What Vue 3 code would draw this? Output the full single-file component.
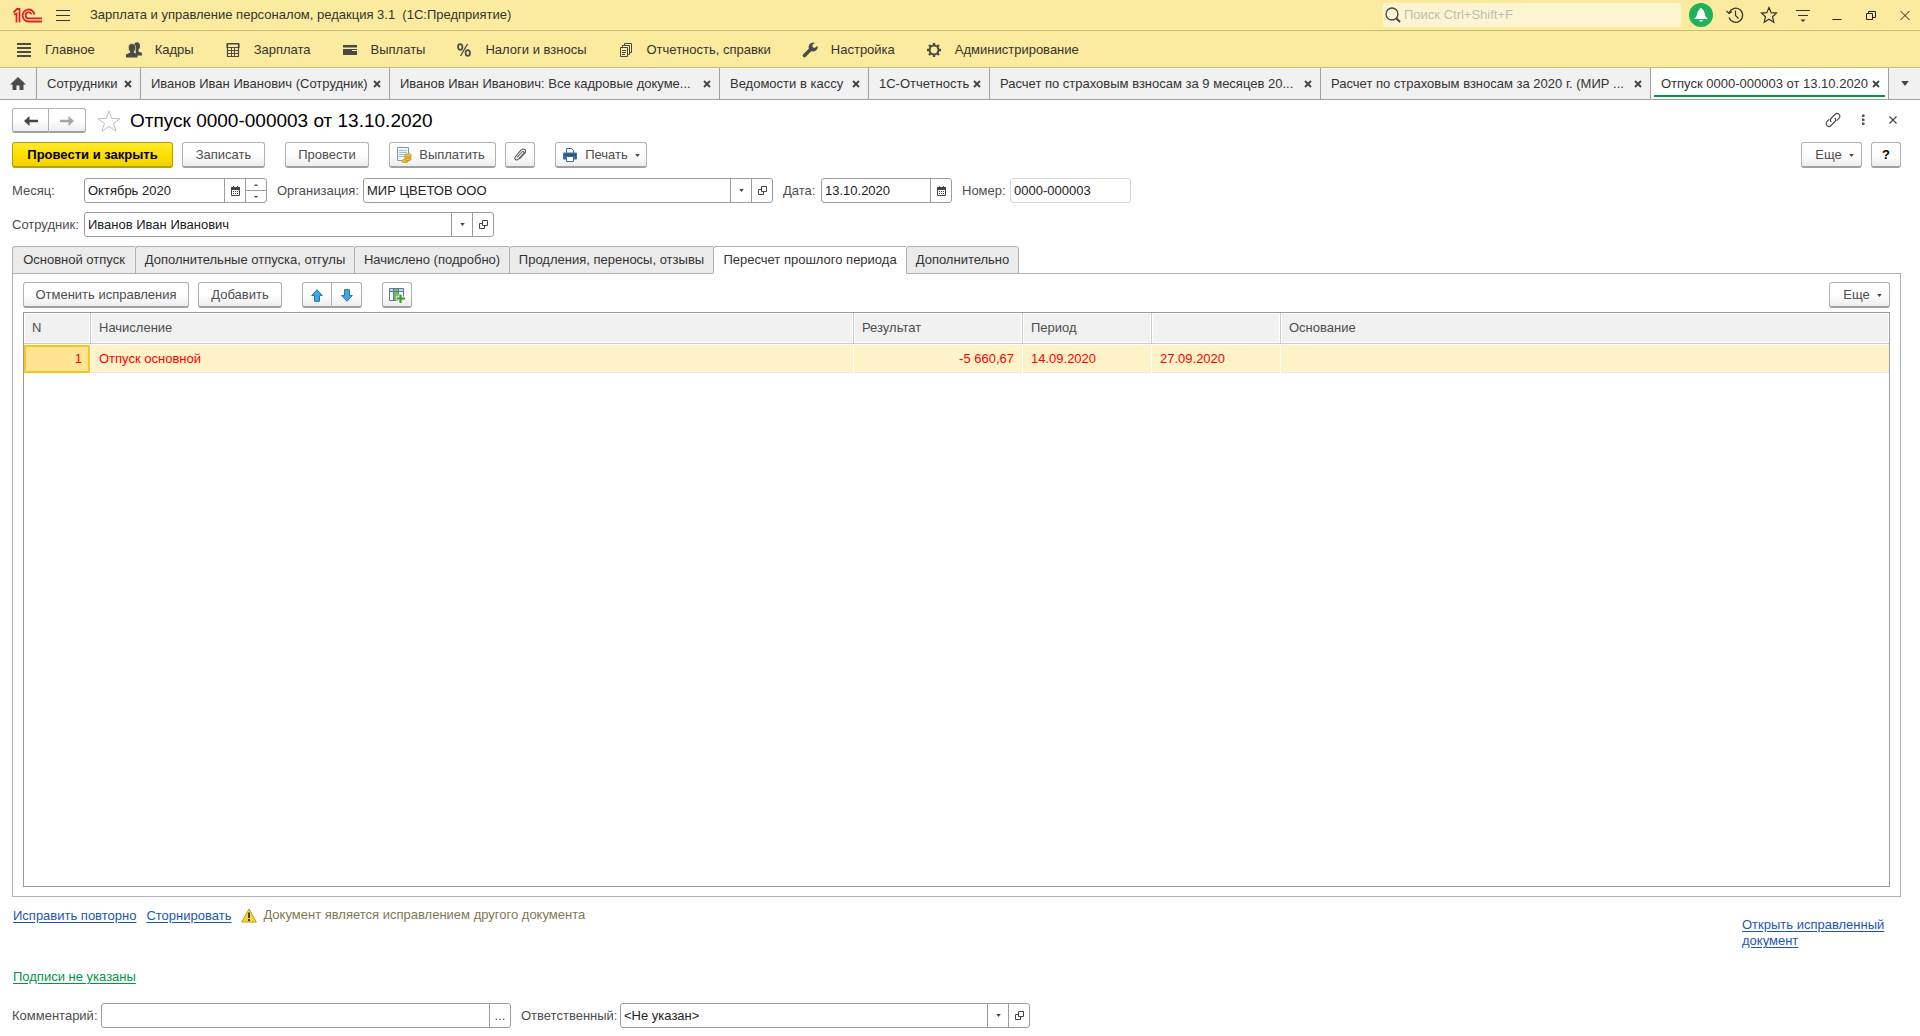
<script setup>
import { ref } from 'vue'

const sections = [
  { icon: 'list', text: 'Главное' },
  { icon: 'people', text: 'Кадры' },
  { icon: 'calc', text: 'Зарплата' },
  { icon: 'wallet', text: 'Выплаты' },
  { icon: 'percent', text: 'Налоги и взносы' },
  { icon: 'docs', text: 'Отчетность, справки' },
  { icon: 'wrench', text: 'Настройка' },
  { icon: 'gear', text: 'Администрирование' },
]

const windows = [
  'Сотрудники',
  'Иванов Иван Иванович (Сотрудник)',
  'Иванов Иван Иванович: Все кадровые докуме...',
  'Ведомости в кассу',
  '1С-Отчетность',
  'Расчет по страховым взносам за 9 месяцев 20...',
  'Расчет по страховым взносам за 2020 г. (МИР ...',
  'Отпуск 0000-000003 от 13.10.2020',
]
const activeWindow = ref(7)

const pages = [
  'Основной отпуск',
  'Дополнительные отпуска, отгулы',
  'Начислено (подробно)',
  'Продления, переносы, отзывы',
  'Пересчет прошлого периода',
  'Дополнительно',
]
const activePage = ref(4)

const systemButtons = [
  { icon: 'history', label: 'История' },
  { icon: 'star', label: 'Избранное' },
  { icon: 'service', label: 'Сервис' },
  { icon: 'minimize', label: 'Свернуть' },
  { icon: 'restore', label: 'Восстановить' },
  { icon: 'cross', label: 'Закрыть' },
]

const rows = [
  { n: 1, name: 'Отпуск основной', result: '-5 660,67', from: '14.09.2020', to: '27.09.2020', basis: '' },
]

const month = ref('Октябрь 2020')
const organization = ref('МИР ЦВЕТОВ ООО')
const date = ref('13.10.2020')
const number = ref('0000-000003')
const employee = ref('Иванов Иван Иванович')
const comment = ref('')
const responsible = ref('<Не указан>')
</script>

<template>
  <div class="app">
    <svg class="sprite" aria-hidden="true">
      <symbol id="list" viewBox="0 0 16 16"><path d="M1 2h14M1 6h14M1 10h14M1 14h14" stroke="#4a4a4a" stroke-width="2" /></symbol>
      <symbol id="people" viewBox="0 0 16 16">
        <g fill="#4a4a4a">
          <ellipse cx="11" cy="4" rx="3" ry="3.8" /><path d="M9.500 7h3v2.500l3.500 1.500v2.500h-6z" />
          <ellipse cx="6" cy="5.800" rx="3.600" ry="4.200" stroke="#fbeb9e" stroke-width=".6" /><path d="M4.200 9h3.600v1.500l3.700 2V15.500H0V12.500l4.200-2z" />
        </g>
      </symbol>
      <symbol id="calc" viewBox="0 0 16 16">
        <path d="M2.500 1.500h11v13h-11zM2 2h12v3.500H2z" fill="none" stroke="#4a4a4a" stroke-width="1.200" />
        <path d="M2 5.500h12M2 8.500h12M2 11.500h12M6.500 5v10M9.500 5v10" stroke="#4a4a4a" />
      </symbol>
      <symbol id="wallet" viewBox="0 0 16 16"><path d="M1 3h14v2.500H1zM1 7h14v6H1z" fill="#4a4a4a" /><path d="M10 8.500h5" stroke="#fbeb9e" stroke-width="1" /></symbol>
      <symbol id="percent" viewBox="0 0 16 16">
        <g fill="none" stroke="#4a4a4a" stroke-width="1.700"><ellipse cx="4.200" cy="5" rx="2.200" ry="2.900" /><ellipse cx="11.800" cy="11" rx="2.200" ry="2.900" /><path d="M11.500 2L4.500 14" stroke-width="1.300" /></g>
      </symbol>
      <symbol id="docs" viewBox="0 0 16 16">
        <g fill="none" stroke="#4a4a4a"><path d="M2.500 5.500h7v9h-7zM4.500 5V3.500h7v9H10M6.500 3V1.500h7v9H12" /><path d="M4 8.500h4M4 10.500h4M4 12.500h3" /></g>
      </symbol>
      <symbol id="wrench" viewBox="0 0 16 16"><path d="M2.500 13.500L9 7" stroke="#4a4a4a" stroke-width="3.600" stroke-linecap="round" /><path d="M13 1A4.500 4.500 0 1 0 15.500 4L12.500 6 10.500 5V2.500z" fill="#4a4a4a" /></symbol>
      <symbol id="gear" viewBox="0 0 16 16">
        <circle cx="8" cy="8" r="4.400" fill="none" stroke="#4a4a4a" stroke-width="2" />
        <path d="M8 1v2.500M8 12.500V15M1 8h2.500M12.500 8H15M3 3l2 2M11 11l2 2M3 13l2-2M11 5l2-2" stroke="#4a4a4a" stroke-width="2.400" />
      </symbol>
      <symbol id="home" viewBox="0 0 16 14"><path d="M8 0L0 7.500h2.500V13h4V8.500h3V13h4V7.500H16z" fill="#4a4a4a" /></symbol>
      <symbol id="history" viewBox="0 0 18 18">
        <g fill="none" stroke="#333" stroke-width="1.200"><path d="M3 7a7 7 0 1 1 0 4.500" /><path d="M9.500 4.500v5l3 3M.5 5L3 7.500 6 5.500" /></g>
      </symbol>
      <symbol id="star" viewBox="0 0 18 18"><path d="M9 1.500l2.200 5.200 5.300.4-4 3.600 1.300 5.600L9 13.300l-4.800 3 1.300-5.600-4-3.600 5.300-.4z" fill="none" stroke="#333" stroke-width="1.200" /></symbol>
      <symbol id="service" viewBox="0 0 18 18"><path d="M2 4.500h14M4 9.500h10" stroke="#333" stroke-width="1.200" /><path d="M6.500 13.500h5L9 16z" fill="#333" /></symbol>
      <symbol id="minimize" viewBox="0 0 18 18"><path d="M4.500 13.500h9" stroke="#222" /></symbol>
      <symbol id="restore" viewBox="0 0 18 18"><path d="M4.500 7.500h6v6h-6zM6.500 7V5.500h7v6H11" fill="none" stroke="#222" /></symbol>
      <symbol id="cross" viewBox="0 0 18 18"><path d="M4.500 5l9 9M13.500 5l-9 9" stroke="#222" /></symbol>
      <symbol id="close" viewBox="0 0 8 8"><path d="M1 1l6 6M7 1L1 7" stroke="#444" stroke-width="1.900" /></symbol>
      <symbol id="down" viewBox="0 0 6 4"><path d="M0 0h6L3 4z" fill="#444" /></symbol>
      <symbol id="open" viewBox="0 0 9 9"><path d="M3.500.5h5v5h-5zM3 3.500H.5v5h5V6" fill="none" stroke="#444" /></symbol>
      <symbol id="calendar" viewBox="0 0 9 10">
        <path d="M.5 2h8v7.500h-8z" fill="none" stroke="#444" /><path d="M0 1h9v3H0zM2 0h1v2H2zM6 0h1v2H6z" fill="#444" /><path d="M2 5.500h5M2 7.500h5" stroke="#444" stroke-dasharray="1 1" />
      </symbol>
    </svg>

    <header class="titlebar">
      <svg class="logo" viewBox="0 0 29 15" aria-label="1С">
        <g fill="none" stroke="#d9222a" stroke-width="1.800">
          <path d="M.5 4.500L4 1h2.500v13.500M1 6.500l2.500-1v9" />
          <path d="M21.500 6.500A6 6 0 1 0 15.500 13.500H29" /><path d="M18.500 6.500A3 3 0 1 0 15.500 10.400H29" />
        </g>
      </svg>
      <button class="bare burger" aria-label="Меню"><svg viewBox="0 0 14 12"><path d="M0 1.500h14M0 6.500h14M0 11.500h14" stroke="#333" /></svg></button>
      <span class="app-name">Зарплата и управление персоналом, редакция 3.1 &nbsp;(1С:Предприятие)</span>
      <label class="search">
        <svg viewBox="0 0 16 16"><g fill="none" stroke="#444" stroke-width="1.300"><circle cx="7" cy="7" r="6" /><path d="M11 11l4 4" stroke-width="2" /></g></svg>
        <input type="text" placeholder="Поиск Ctrl+Shift+F" aria-label="Поиск">
      </label>
      <div class="system">
        <button class="bare bell" aria-label="Оповещения"><svg viewBox="0 0 16 16"><path d="M8 1c1 0 1.500 1 1.500 1.500C12 4 11.500 8 13 10l2 2H1l2-2c1.500-2 1-6 3.500-7.500C6.500 2 7 1 8 1zM6 13h4c-.5 2-3.500 2-4 0z" fill="#fff" /></svg></button>
        <button v-for="b in systemButtons" :key="b.icon" class="bare" :aria-label="b.label"><svg><use :href="'#' + b.icon" /></svg></button>
      </div>
    </header>

    <nav class="sections">
      <a v-for="s in sections" :key="s.icon" href="#"><svg><use :href="'#' + s.icon" /></svg>{{ s.text }}</a>
    </nav>

    <nav class="windows">
      <button class="bare home" aria-label="Начальная страница"><svg><use href="#home" /></svg></button>
      <div v-for="(w, i) in windows" :key="w" class="window" :class="{ active: i === activeWindow }">
        <button class="bare caption" @click="activeWindow = i">{{ w }}</button>
        <button class="bare shut" aria-label="Закрыть"><svg><use href="#close" /></svg></button>
      </div>
      <button class="bare more-windows" aria-label="Все окна"><svg><use href="#down" /></svg></button>
    </nav>

    <main class="form">
      <div class="heading">
        <div class="pair history">
          <button class="btn" aria-label="Назад"><svg viewBox="0 0 14 10"><path d="M5.500 0v3.800H14v2.400H5.500V10L0 5z" fill="#444" /></svg></button>
          <button class="btn" aria-label="Вперед"><svg viewBox="0 0 14 10"><path d="M8.500 0v3.800H0v2.400h8.500V10L14 5z" fill="#a5a5a5" /></svg></button>
        </div>
        <button class="bare favorite" aria-label="В избранное"><svg viewBox="0 0 24 22"><path d="M12 .8l2.700 7.700 8.300.2-6.500 4.800 2.500 7.700-7-4.700-7 4.700 2.500-7.700L1 8.700l8.300-.2z" fill="none" stroke="#b9bec6" /></svg></button>
        <h1>Отпуск 0000-000003 от 13.10.2020</h1>
        <div class="heading-tools">
          <button class="bare" aria-label="Ссылка"><svg viewBox="0 0 16 16"><g fill="none" stroke="#444" stroke-width="1.100" stroke-linecap="round"><path d="M6 9.500C4.800 8.300 5.500 7 6.500 6L10 2.500c1.200-1.200 2.800-1.300 4-.2s1.200 2.700 0 4L12 8.300" /><path d="M10 6.500c1.200 1.200.5 2.500-.5 3.500L6 13.500c-1.200 1.200-2.800 1.300-4 .2s-1.200-2.700 0-4L4 7.700" /></g></svg></button>
          <button class="bare" aria-label="Еще"><svg viewBox="0 0 16 16"><path d="M7 2.500h2.500V5H7zM7 6.500h2.500V9H7zM7 10.500h2.500V13H7z" fill="#555" /></svg></button>
          <button class="bare" aria-label="Закрыть"><svg viewBox="0 0 16 16"><path d="M4.500 4.500l7 7M11.500 4.500l-7 7" stroke="#444" stroke-width="1.200" /></svg></button>
        </div>
      </div>

      <div class="commands">
        <button class="btn primary">Провести и закрыть</button>
        <button class="btn write">Записать</button>
        <button class="btn post">Провести</button>
        <button class="btn pay">
          <svg viewBox="0 0 16 16">
            <path d="M1.500.5h11v13h-11z" fill="#f2f8fc" stroke="#7c9ab5" /><path d="M3 3.500h8M3 5.500h8M3 7.500h8M3 9.500h5" stroke="#9cbdd6" />
            <g fill="#f6c332" stroke="#bd8516" stroke-width=".7"><ellipse cx="9" cy="14" rx="3.300" ry="1.500" /><ellipse cx="12" cy="12" rx="3.300" ry="1.600" /><ellipse cx="11.700" cy="10" rx="3.300" ry="1.600" /><ellipse cx="12" cy="8.300" rx="3.300" ry="1.600" /></g>
          </svg>Выплатить</button>
        <button class="btn clip" aria-label="Файлы"><svg viewBox="0 0 14 16"><path d="M4 10.500L9 5c1.200-1.300 2.800.2 1.600 1.500L5.500 12c-2 2.200-5 0-3-2.500L8 3.200c2.600-2.700 6.200.3 3.800 3L6.500 12" fill="none" stroke="#555" stroke-width="1.100" /></svg></button>
        <button class="btn print">
          <svg viewBox="0 0 16 14"><rect x="1" y="4.500" width="14" height="7" rx="1" fill="#3e6d95" /><path d="M4.500.5h5l2 2V5h-7zM4.500 8.500h7v5h-7z" fill="#fff" stroke="#3e6d95" /><path d="M2 7h12" stroke="#1d4468" /></svg>Печать<svg class="arrow"><use href="#down" /></svg></button>
        <button class="btn more push">Еще<svg class="arrow"><use href="#down" /></svg></button>
        <button class="btn help" aria-label="Справка">?</button>
      </div>

      <div class="fields">
        <label for="month" class="l-first">Месяц:</label>
        <div class="field w-month">
          <input id="month" v-model="month" type="text">
          <button aria-label="Календарь"><svg class="i-cal"><use href="#calendar" /></svg></button>
          <div class="spin">
            <button aria-label="Больше"><svg viewBox="0 0 4 2"><path d="M0 2h4L2 0z" fill="#444" /></svg></button>
            <button aria-label="Меньше"><svg viewBox="0 0 4 2"><path d="M0 0h4L2 2z" fill="#444" /></svg></button>
          </div>
        </div>
        <label for="org" class="l-org">Организация:</label>
        <div class="field w-ref">
          <input id="org" v-model="organization" type="text">
          <button aria-label="Выбрать"><svg class="i-down"><use href="#down" /></svg></button>
          <button aria-label="Открыть"><svg class="i-open"><use href="#open" /></svg></button>
        </div>
        <label for="date" class="l-date">Дата:</label>
        <div class="field w-date">
          <input id="date" v-model="date" type="text">
          <button aria-label="Календарь"><svg class="i-cal"><use href="#calendar" /></svg></button>
        </div>
        <label for="number" class="l-number">Номер:</label>
        <div class="field w-number readonly"><input id="number" v-model="number" type="text" readonly></div>
      </div>

      <div class="fields second">
        <label for="employee" class="l-first">Сотрудник:</label>
        <div class="field w-ref">
          <input id="employee" v-model="employee" type="text">
          <button aria-label="Выбрать"><svg class="i-down"><use href="#down" /></svg></button>
          <button aria-label="Открыть"><svg class="i-open"><use href="#open" /></svg></button>
        </div>
      </div>

      <div class="pages" role="tablist">
        <button v-for="(p, i) in pages" :key="p" role="tab" :aria-selected="i === activePage" :class="{ active: i === activePage }" @click="activePage = i">{{ p }}</button>
      </div>

      <section class="panel">
        <div class="commands">
          <button class="btn cancel">Отменить исправления</button>
          <button class="btn add">Добавить</button>
          <div class="pair move">
            <button class="btn" aria-label="Вверх"><svg viewBox="0 0 12 13"><path d="M6 .7l5.300 5.800H8.500v5.800h-5V6.500H.7z" fill="#3fa9e8" stroke="#2476ad" /></svg></button>
            <button class="btn" aria-label="Вниз"><svg viewBox="0 0 12 13"><path d="M6 12.300l5.300-5.800H8.500V.7h-5v5.800H.7z" fill="#3fa9e8" stroke="#2476ad" /></svg></button>
          </div>
          <button class="btn columns" aria-label="Добавить колонку"><svg viewBox="0 0 16 16"><path d="M.5 1.500h14v12H.5z" fill="#fff" stroke="#58798f" /><path d="M1 2h13v2.500H1z" fill="#c9dbe6" /><path d="M5 2h4v11H5z" fill="#75bd5b" /><path d="M.5 4.500h14M4.500 1.500v12M9.500 1.500v12" stroke="#58798f" /><path d="M11.500 7v9M7 11.500h9" stroke="#fff" stroke-width="4" /><path d="M11.500 7.500V16M7.500 11.500H16" stroke="#3c9a1e" stroke-width="2.200" /></svg></button>
          <button class="btn more push">Еще<svg class="arrow"><use href="#down" /></svg></button>
        </div>
        <div class="grid">
          <table>
            <colgroup><col class="c-n"><col><col class="c-result"><col class="c-from"><col class="c-to"><col class="c-basis"></colgroup>
            <thead>
              <tr><th>N</th><th>Начисление</th><th>Результат</th><th>Период</th><th></th><th>Основание</th></tr>
            </thead>
            <tbody>
              <tr v-for="r in rows" :key="r.n">
                <td class="num current">{{ r.n }}</td><td>{{ r.name }}</td><td class="num">{{ r.result }}</td><td>{{ r.from }}</td><td>{{ r.to }}</td><td>{{ r.basis }}</td>
              </tr>
            </tbody>
          </table>
        </div>
      </section>

      <div class="notes">
        <a href="#">Исправить повторно</a>
        <a href="#">Сторнировать</a>
        <span class="warning">
          <svg viewBox="0 0 16 15"><path d="M8 1l7.300 13H.7z" fill="#f5d93a" stroke="#b99a1b" stroke-linejoin="round" /><path d="M8 4.500v5.500M8 11v2" stroke="#333" stroke-width="1.800" /></svg>
          Документ является исправлением другого документа
        </span>
        <a href="#" class="corrected">Открыть исправленный документ</a>
      </div>

      <a href="#" class="signatures">Подписи не указаны</a>

      <div class="fields last">
        <label for="comment" class="l-comment">Комментарий:</label>
        <div class="field w-comment">
          <input id="comment" v-model="comment" type="text">
          <button aria-label="Редактировать">...</button>
        </div>
        <label for="responsible" class="l-resp">Ответственный:</label>
        <div class="field w-ref">
          <input id="responsible" v-model="responsible" type="text">
          <button aria-label="Выбрать"><svg class="i-down"><use href="#down" /></svg></button>
          <button aria-label="Открыть"><svg class="i-open"><use href="#open" /></svg></button>
        </div>
      </div>
    </main>
  </div>
</template>

<style>
body { margin: 0; background: #fff; }
</style>

<style scoped>
.app { display: flex; flex-direction: column; min-height: 100vh; font: 13px/16px "Liberation Sans", Arial, sans-serif; color: #333; }
.app * { box-sizing: border-box; }
.sprite { display: none; }
svg { display: block; flex: none; }
button, input { font: inherit; color: inherit; margin: 0; }
.bare { border: 0; background: none; padding: 0; display: flex; align-items: center; justify-content: center; }

.titlebar { display: flex; align-items: center; height: 31px; padding: 0 3px 0 13px; background: #fbeb9e; border-bottom: 1px solid #c9bb72; }
.logo { width: 29px; height: 15px; }
.burger { margin: 0 20px 0 14px; }
.burger svg { width: 14px; height: 12px; }
.app-name { flex: 1; white-space: nowrap; }
.search { display: flex; align-items: center; gap: 3px; width: 298px; height: 24px; padding: 0 2px; margin-right: 8px; background: #fdf5d2; border-radius: 3px; }
.search svg { width: 16px; height: 16px; }
.search input { flex: 1; border: 0; padding: 0; background: none; outline: none; }
.search input::placeholder { color: #bdbdb8; opacity: 1; }
.system { display: flex; align-items: center; gap: 10px; }
.system .bare { width: 24px; height: 24px; }
.system svg { width: 18px; height: 18px; }
.system .bell { background: #1fb25a; border-radius: 50%; }
.system .bell svg { width: 16px; height: 16px; }

.sections { display: flex; align-items: center; gap: 31px; height: 37px; padding: 1px 16px 0; background: #fbeb9e; border-bottom: 1px solid #c9bb72; }
.sections a { display: flex; align-items: center; gap: 13px; color: #333; text-decoration: none; white-space: nowrap; }
.sections svg { width: 16px; height: 16px; }

.windows { display: grid; grid-template-columns: 37px 104px 249px 330px 149px 121px 331px 330px 238px 1fr; height: 32px; background: #f1f1f1; border-bottom: 1px solid #a0a0a0; }
.home, .window { border-right: 1px solid #a0a0a0; }
.home svg { width: 16px; height: 14px; }
.window { position: relative; display: flex; align-items: center; justify-content: space-between; padding: 0 8px 0 10px; min-width: 0; }
.caption { white-space: nowrap; }
.shut svg { width: 8px; height: 8px; }
.window.active { background: #fff; }
.window.active::after { content: ""; position: absolute; left: 3px; right: 3px; bottom: 2px; height: 2px; background: #009646; }
.more-windows svg { width: 8px; height: 5px; }

.form { flex: 1; display: flex; flex-direction: column; padding: 8px 19px 8px 12px; }
.heading { display: flex; align-items: center; height: 25px; margin-bottom: 9px; }
.heading h1 { margin: 0; font-size: 19px; line-height: 24px; font-weight: 400; color: #000; }
.favorite { margin: 0 9px 0 11px; }
.favorite svg { width: 24px; height: 22px; }
.heading-tools { display: flex; gap: 14px; margin-left: auto; padding-bottom: 2px; }
.heading-tools svg { width: 16px; height: 16px; }

.commands { display: flex; }
.btn { display: flex; align-items: center; justify-content: center; height: 26px; padding: 1px 0 0; border: 1px solid #b0b0b0; border-bottom: 2px solid #a0a0a0; border-radius: 3px; background: linear-gradient(#fff 50%, #ededed); color: #4d4d4d; white-space: nowrap; }
.pair { display: flex; }
.pair .btn:first-child { border-radius: 3px 0 0 3px; }
.pair .btn:last-child { border-radius: 0 3px 3px 0; border-left: 0; }
.history .btn { width: 37px; height: 25px; }
.history svg { width: 14px; height: 10px; }
.primary { width: 161px; border-color: #b8a000; background: linear-gradient(#ffea32, #ffe000 50%, #f0d000); color: #000; font-weight: 700; }
.write { width: 83px; margin-left: 9px; }
.post { width: 84px; margin-left: 20px; }
.pay { width: 107px; margin-left: 20px; gap: 7px; padding-right: 4px; }
.clip { width: 30px; margin-left: 9px; }
.print { width: 92px; margin-left: 20px; gap: 7px; }
.pay svg { width: 16px; height: 16px; }
.clip svg { width: 14px; height: 16px; }
.print svg { width: 16px; height: 14px; }
.btn .arrow { width: 5px; height: 3px; }
.more { width: 61px; gap: 7px; padding-left: 6px; }
.push { margin-left: auto; }
.help { width: 30px; margin-left: 9px; color: #000; font-weight: 700; }

.fields { display: flex; align-items: center; margin-top: 10px; color: #4d4d4d; }
.fields.second { margin-top: 9px; }
.l-first { width: 72px; }
.l-org { width: 86px; margin-left: 10px; }
.l-date { width: 38px; margin-left: 10px; }
.l-number { width: 48px; margin-left: 10px; }
.l-comment { width: 89px; }
.l-resp { width: 99px; margin-left: 10px; }
.field { display: flex; height: 25px; border: 1px solid #9c9c9c; border-radius: 3px; overflow: hidden; background: #fff; }
.field input { flex: 1; min-width: 0; padding: 0 3px; border: 0; outline: none; background: none; color: #222; }
.field button { display: flex; align-items: center; justify-content: center; width: 21px; padding: 0; border: 0; border-left: 1px solid #9c9c9c; background: none; }
.field.readonly { border-color: #d6d6d6; }
.w-month { width: 183px; }
.w-ref { width: 410px; }
.w-date { width: 131px; }
.w-number { width: 121px; }
.w-comment { width: 410px; }
.spin { display: flex; flex-direction: column; }
.spin button { flex: 1; }
.spin button + button { border-top: 1px solid #9c9c9c; }
.spin svg { width: 4px; height: 2px; }
.i-cal { width: 9px; height: 10px; }
.i-down { width: 5px; height: 3px; }
.i-open { width: 9px; height: 9px; }

.pages { display: grid; grid-template-columns: 123px 219px 155px 204px 193px 113px; height: 28px; margin-top: 9px; position: relative; }
.pages button { padding: 0; border: 1px solid #b0b0b0; border-right: 0; border-radius: 3px 0 0 0; background: #ebebeb; white-space: nowrap; }
.pages button:last-child { border-right: 1px solid #b0b0b0; border-radius: 3px 3px 0 0; }
.pages button.active { background: #fff; border-bottom-color: #fff; }

.panel { flex: 1; display: flex; flex-direction: column; margin-top: -1px; padding: 8px 10px 9px; border: 1px solid #b0b0b0; }
.cancel { width: 166px; }
.add { width: 84px; margin-left: 9px; }
.move { margin-left: 20px; }
.move .btn { width: 30px; }
.move svg { width: 12px; height: 13px; }
.columns { width: 30px; margin-left: 20px; }
.columns svg { width: 16px; height: 16px; }
.grid { flex: 1; margin-top: 4px; border: 1px solid #9c9c9c; }
table { width: 100%; table-layout: fixed; border-collapse: separate; border-spacing: 0; }
.c-n { width: 67px; }
.c-result { width: 169px; }
.c-from, .c-to { width: 129px; }
.c-basis { width: 608px; }
th { height: 31px; padding: 0 8px 1px; border: solid #ccc; border-width: 0 1px 1px 0; background: #f1f1f1; box-shadow: inset 0 0 0 1px #fff; font-weight: 400; text-align: left; color: #4d4d4d; }
th:last-child { border-right: 0; }
td { height: 29px; padding: 0 8px; border: solid #fff; border-width: 1px 1px 0 0; box-shadow: inset 0 -1px #e6e6e6; background: #fef2c8; color: #f00; }
td:last-child { border-right: 0; }
.num { text-align: right; }
.num.current { background: #ffe591; box-shadow: inset 0 0 0 2px #fbc41f; }

.notes { display: flex; align-items: flex-start; height: 72px; padding: 10px 9px 0 1px; }
.notes a, .signatures { color: #1a56b8; text-underline-offset: 2px; }
.notes a { margin: 1px 10px 0 0; }
.warning { display: flex; align-items: center; gap: 6px; color: #7f7854; }
.warning svg { width: 16px; height: 15px; }
.notes .corrected { width: 150px; margin: 10px 0 0 auto; }
.signatures { align-self: flex-start; margin-left: 1px; color: #009646; }
.fields.last { margin-top: 18px; }
</style>
